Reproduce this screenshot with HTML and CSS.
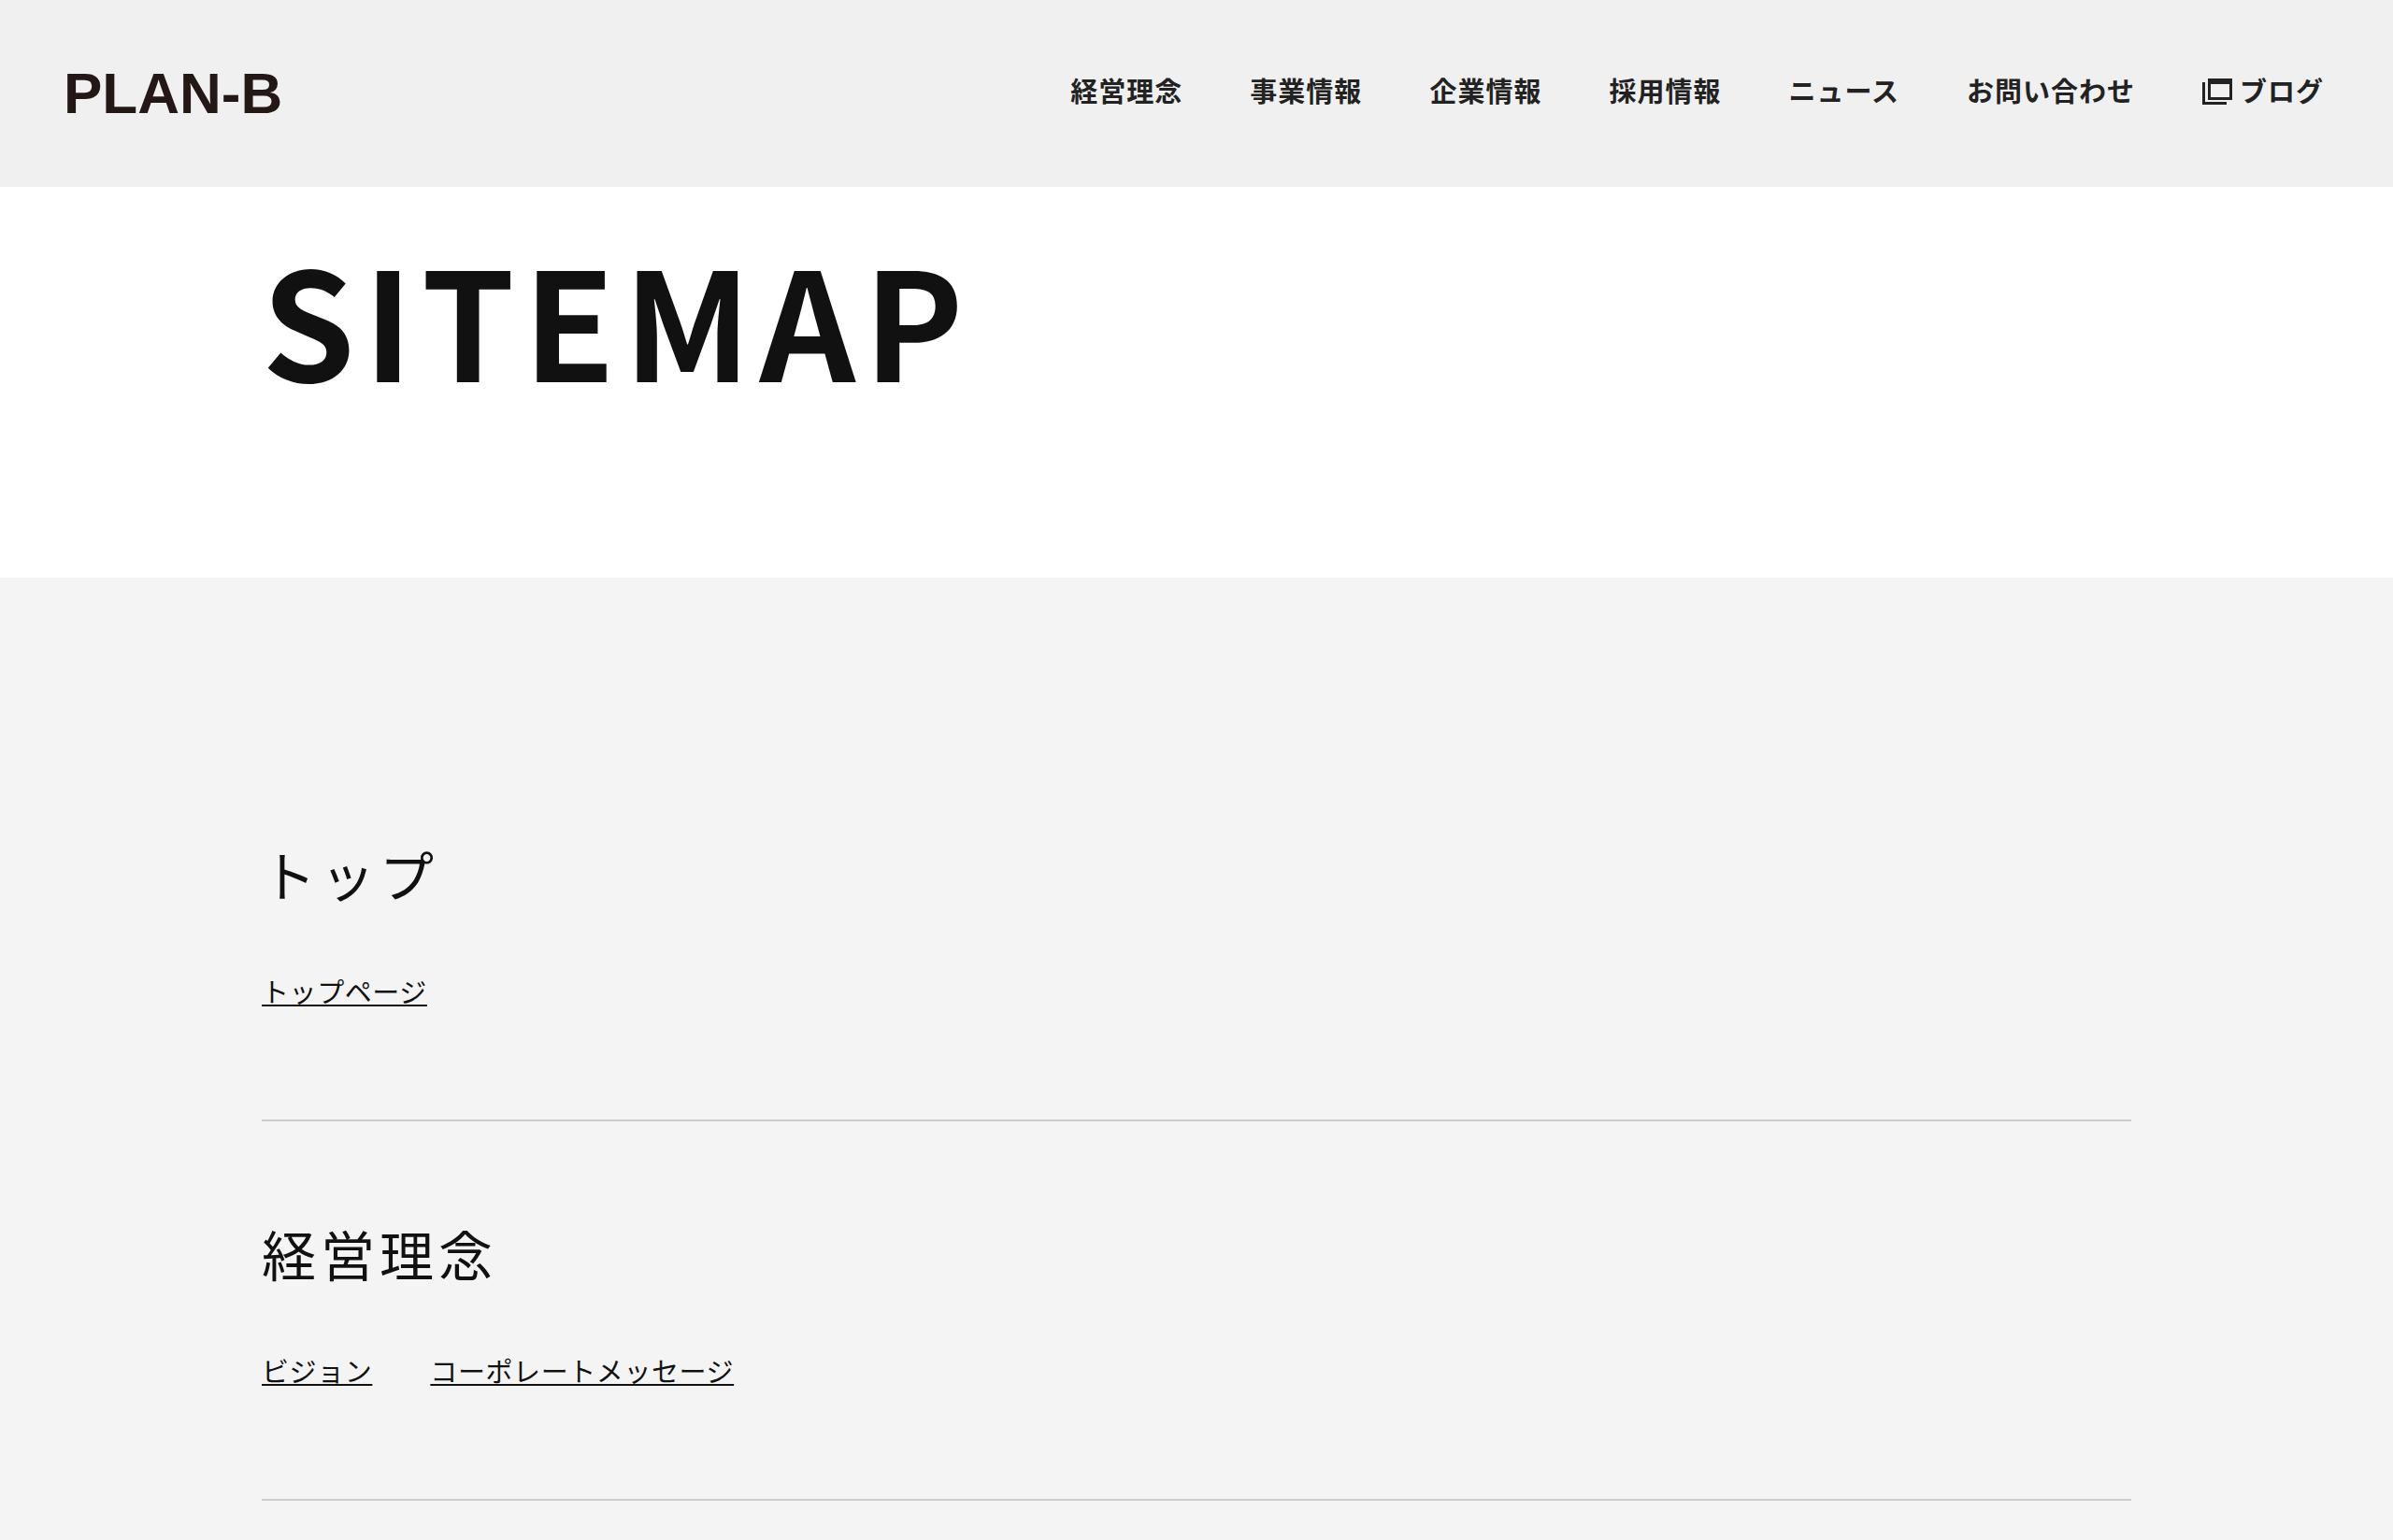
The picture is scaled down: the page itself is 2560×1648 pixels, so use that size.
FILE: index.html
```html
<!DOCTYPE html>
<html lang="ja">
<head>
  <meta charset="UTF-8">
  <meta name="viewport" content="width=device-width, initial-scale=1.0">
  <title>SITEMAP | PLAN-B</title>
  <link rel="stylesheet" href="styles.css">
</head>
<body>
  <header class="header">
    <a href="#" class="logo">PLAN-B</a>
    <nav>
      <ul class="nav-list">
        <li><a href="#">経営理念</a></li>
        <li><a href="#">事業情報</a></li>
        <li><a href="#">企業情報</a></li>
        <li><a href="#">採用情報</a></li>
        <li><a href="#">ニュース</a></li>
        <li><a href="#">お問い合わせ</a></li>
        <li>
          <a href="#" class="blog-link">
            <svg class="icon-blank" viewBox="0 0 32 28" aria-hidden="true">
              <path d="M6 0h26v23H6z M9 6v14h20V6z" fill="#222" fill-rule="evenodd"/>
              <path d="M0 4h3v21h23v3H0z" fill="#222"/>
            </svg>ブログ</a>
        </li>
      </ul>
    </nav>
  </header>

  <main>
    <div class="page-title">
      <h1>SITEMAP</h1>
    </div>

    <div class="sitemap">
      <section class="sitemap-item">
        <h2>トップ</h2>
        <ul class="link-list">
          <li><a href="#">トップページ</a></li>
        </ul>
      </section>
      <section class="sitemap-item">
        <h2>経営理念</h2>
        <ul class="link-list">
          <li><a href="#">ビジョン</a></li>
          <li><a href="#">コーポレートメッセージ</a></li>
        </ul>
      </section>
    </div>
  </main>
</body>
</html>
```
FILE: styles.css
```css
* {
  box-sizing: border-box;
}
body {
  margin: 0;
  min-height: 100vh;
  display: flex;
  flex-direction: column;
  font-family: "Noto Sans CJK JP", sans-serif;
  font-size: 29px;
  line-height: 40px;
  color: #111;
  background-color: #f4f4f4;
}
h1, h2, ul {
  margin: 0;
  padding: 0;
}
ul {
  list-style: none;
}
a {
  color: inherit;
}

/* header */
.header {
  display: flex;
  align-items: center;
  justify-content: space-between;
  min-height: 200px;
  padding: 0 74px 8px 68px;
  background-color: #f0f0f0;
}
.logo {
  padding-top: 8px;
  font-family: "Liberation Sans", Arial, sans-serif;
  font-size: 62px;
  font-weight: bold;
  line-height: 72px;
  color: #231815;
  text-decoration: none;
}
.nav-list {
  display: flex;
  gap: 72px;
  font-weight: bold;
  letter-spacing: 1px;
  color: #222;
}
.nav-list a {
  text-decoration: none;
}
.blog-link {
  display: flex;
  align-items: center;
  gap: 8px;
}
.icon-blank {
  width: 32px;
  height: 28px;
  margin-top: 4px;
}

/* title */
.page-title {
  padding: 59px 280px 199px;
  background-color: #fff;
}
.page-title h1 {
  font-size: 160px;
  font-weight: bold;
  line-height: 160px;
  letter-spacing: 9px;
}

/* sitemap */
.sitemap {
  padding: 176px 280px 0;
}
.sitemap-item {
  padding: 109px 0 118px;
  border-bottom: 2px solid #ccc;
}
.sitemap-item h2 {
  margin-bottom: 73px;
  font-size: 58px;
  font-weight: 400;
  line-height: 64px;
  letter-spacing: 5px;
}
.link-list {
  display: flex;
  flex-wrap: wrap;
  gap: 16px 62px;
  letter-spacing: 0.02em;
}
.link-list a {
  text-decoration-thickness: 2px;
  text-decoration-skip-ink: none;
  text-underline-offset: 2px;
}
```
